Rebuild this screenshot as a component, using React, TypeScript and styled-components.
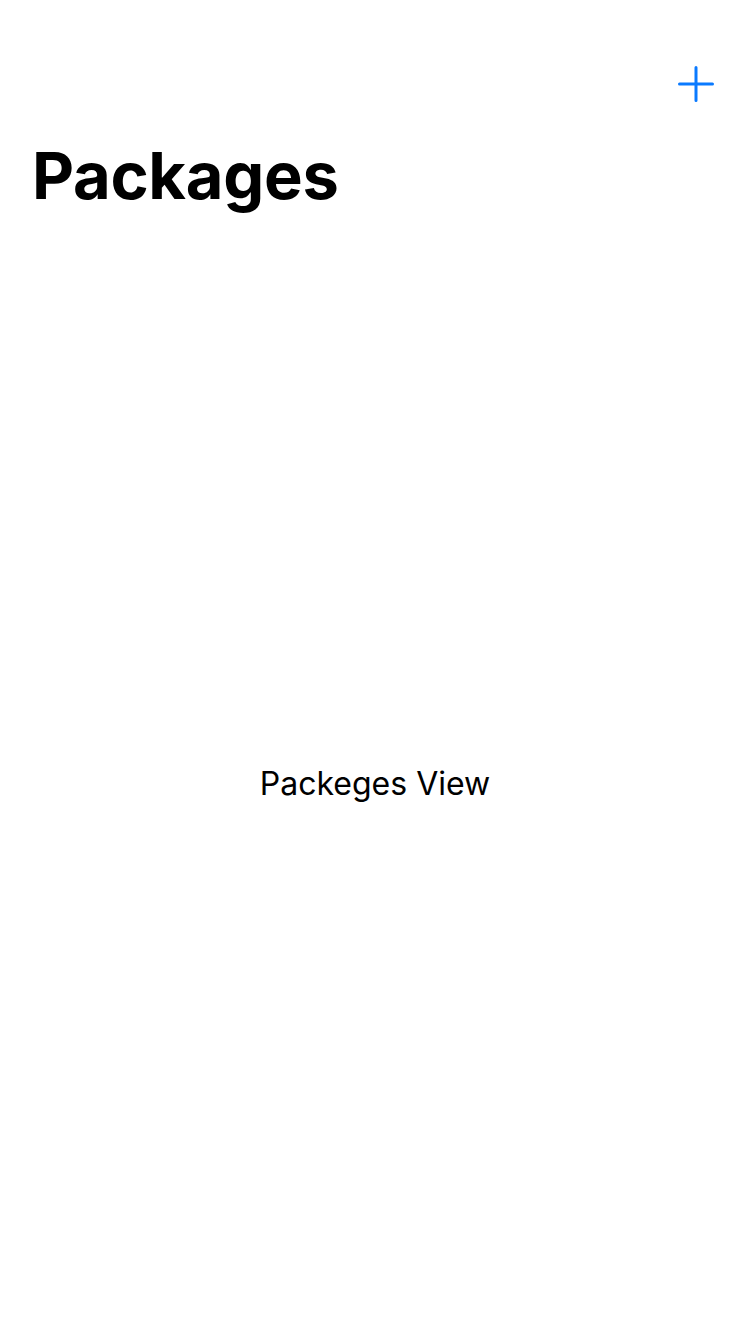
import * as React from 'react'
import styled, { createGlobalStyle } from 'styled-components'

const GlobalStyle = createGlobalStyle`
    html, body {
        margin: 0;
        padding: 0;
        background: #ffffff;
        font-family: Inter, "Noto Sans", sans-serif;
    }
`

const Screen = styled.div`
    display: flex;
    flex-direction: column;
    width: 750px;
    height: 1334px;
    background: #ffffff;
`

const StatusBar = styled.div`
    height: 40px;
`

const NavBar = styled.div`
    height: 88px;
    display: flex;
    align-items: center;
    justify-content: flex-end;
    padding: 0 32px;
`

const AddButton = styled.button`
    width: 44px;
    height: 44px;
    padding: 0;
    border: none;
    background: none;
    display: flex;
    align-items: center;
    justify-content: center;
    color: #0a7aff;
    cursor: pointer;
`

const LargeTitle = styled.h1`
    margin: 0;
    height: 104px;
    padding: 0 32px;
    font-size: 65px;
    font-weight: 700;
    letter-spacing: -0.3px;
    color: #000000;
    line-height: 96px;
`

const Content = styled.main`
    flex: 1;
    display: flex;
    align-items: center;
    justify-content: center;
`

const Placeholder = styled.span`
    font-size: 32px;
    font-weight: 400;
    color: #000000;
`

const PlusIcon = () => (
    <svg width="36" height="36" viewBox="0 0 36 36" fill="none">
        <path d="M18 1.5v33M1.5 18h33" stroke="currentColor" strokeWidth="3" strokeLinecap="round" />
    </svg>
)

export default function App() {
    return (
        <>
            <GlobalStyle />
            <Screen>
                <StatusBar />
                <NavBar>
                    <AddButton aria-label="Add package">
                        <PlusIcon />
                    </AddButton>
                </NavBar>
                <LargeTitle>Packages</LargeTitle>
                <Content>
                    <Placeholder>Packeges View</Placeholder>
                </Content>
            </Screen>
        </>
    )
}
